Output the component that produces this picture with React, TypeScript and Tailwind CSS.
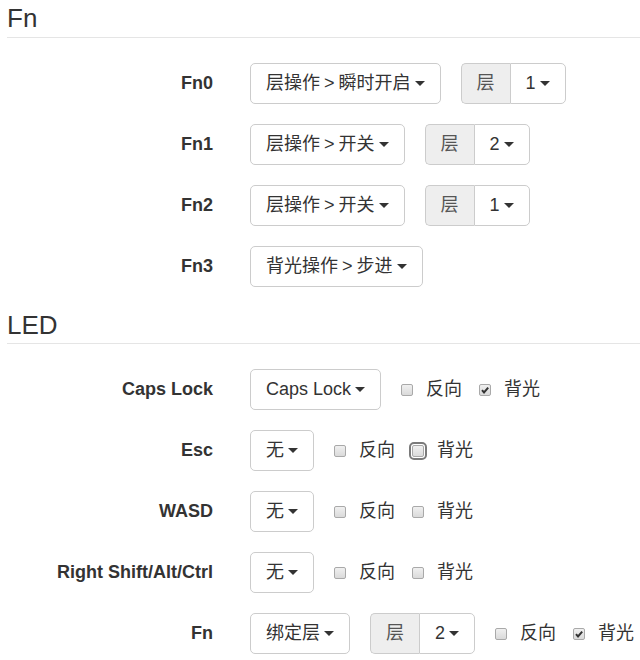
import React from "react";

const Caret = () => (
  <span className="ml-[4px] inline-block w-0 h-0 border-l-[5px] border-r-[5px] border-t-[5px] border-l-transparent border-r-transparent border-t-[#333] align-middle" />
);

const Gt = () => <span className="mx-[-1px]"> &gt; </span>;

const Btn = ({ children }: { children: React.ReactNode }) => (
  <div className="flex items-center h-[41px] px-[15px] border border-[#ccc] rounded-[5px] bg-white text-[18px] leading-[25px] text-[#333] whitespace-nowrap">
    <span className="whitespace-pre">{children}</span>
    <Caret />
  </div>
);

const LayerGroup = ({ n }: { n: string }) => (
  <div className="flex h-[41px]">
    <div className="flex items-center px-[15px] bg-[#eee] border border-r-0 border-[#ccc] rounded-l-[5px] text-[#555] text-[18px] leading-[25px]">
      层
    </div>
    <div className="flex items-center px-[15px] border border-[#ccc] rounded-r-[5px] bg-white text-[18px] leading-[25px] text-[#333]">
      <span>{n}</span>
      <Caret />
    </div>
  </div>
);

const Check = ({ checked, focus }: { checked?: boolean; focus?: boolean }) => (
  <span
    className={
      "relative inline-block w-[12px] h-[12px] rounded-[2px] border border-[#a9a9a9] bg-gradient-to-b from-[#f0f0f0] to-[#dadada] " +
      (focus ? "outline-2 outline-[#7a7a7a] outline-offset-[1px] outline" : "")
    }
  >
    {checked && (
      <svg viewBox="0 0 12 12" className="absolute left-[-1px] top-[-1px] w-[12px] h-[12px]">
        <path d="M3 6.2 L5 8.4 L9.2 3.6" fill="none" stroke="#333" strokeWidth="2" />
      </svg>
    )}
  </span>
);

const Checks = ({ rev, bl, focusBl }: { rev?: boolean; bl?: boolean; focusBl?: boolean }) => (
  <div className="flex items-center text-[18px] leading-[25px] text-[#333]">
    <Check checked={rev} />
    <span className="ml-[13px]">反向</span>
    <span className="ml-[17px] flex items-center">
      <Check checked={bl} focus={focusBl} />
    </span>
    <span className="ml-[13px]">背光</span>
  </div>
);

const Row = ({ label, children }: { label: string; children: React.ReactNode }) => (
  <div className="flex items-center">
    <div className="w-[206px] shrink-0 text-right font-bold text-[18px] leading-[25px] text-[#333] whitespace-nowrap">
      {label}
    </div>
    <div className="ml-[37px] flex items-center gap-[20px]">{children}</div>
  </div>
);

export default function App() {
  return (
    <div
      className="pl-[7px] bg-white min-h-[660px] text-[#333]"
      style={{ fontFamily: '"Liberation Sans", Arial, "Noto Sans CJK SC", sans-serif' }}
    >
      <div className="text-[26px] leading-[37px] border-b border-[#e5e5e5] pl-0">Fn</div>
      <div className="mt-[25px] flex flex-col gap-[20px]">
        <Row label="Fn0">
          <Btn>层操作<Gt />瞬时开启</Btn>
          <LayerGroup n="1" />
        </Row>
        <Row label="Fn1">
          <Btn>层操作<Gt />开关</Btn>
          <LayerGroup n="2" />
        </Row>
        <Row label="Fn2">
          <Btn>层操作<Gt />开关</Btn>
          <LayerGroup n="1" />
        </Row>
        <Row label="Fn3">
          <Btn>背光操作<Gt />步进</Btn>
        </Row>
      </div>
      <div className="mt-[20px] text-[26px] leading-[36px] border-b border-[#e5e5e5]">LED</div>
      <div className="mt-[25px] flex flex-col gap-[20px]">
        <Row label="Caps Lock">
          <Btn>Caps Lock</Btn>
          <Checks bl />
        </Row>
        <Row label="Esc">
          <Btn>无</Btn>
          <Checks focusBl />
        </Row>
        <Row label="WASD">
          <Btn>无</Btn>
          <Checks />
        </Row>
        <Row label="Right Shift/Alt/Ctrl">
          <Btn>无</Btn>
          <Checks />
        </Row>
        <Row label="Fn">
          <Btn>绑定层</Btn>
          <LayerGroup n="2" />
          <Checks bl />
        </Row>
      </div>
    </div>
  );
}
